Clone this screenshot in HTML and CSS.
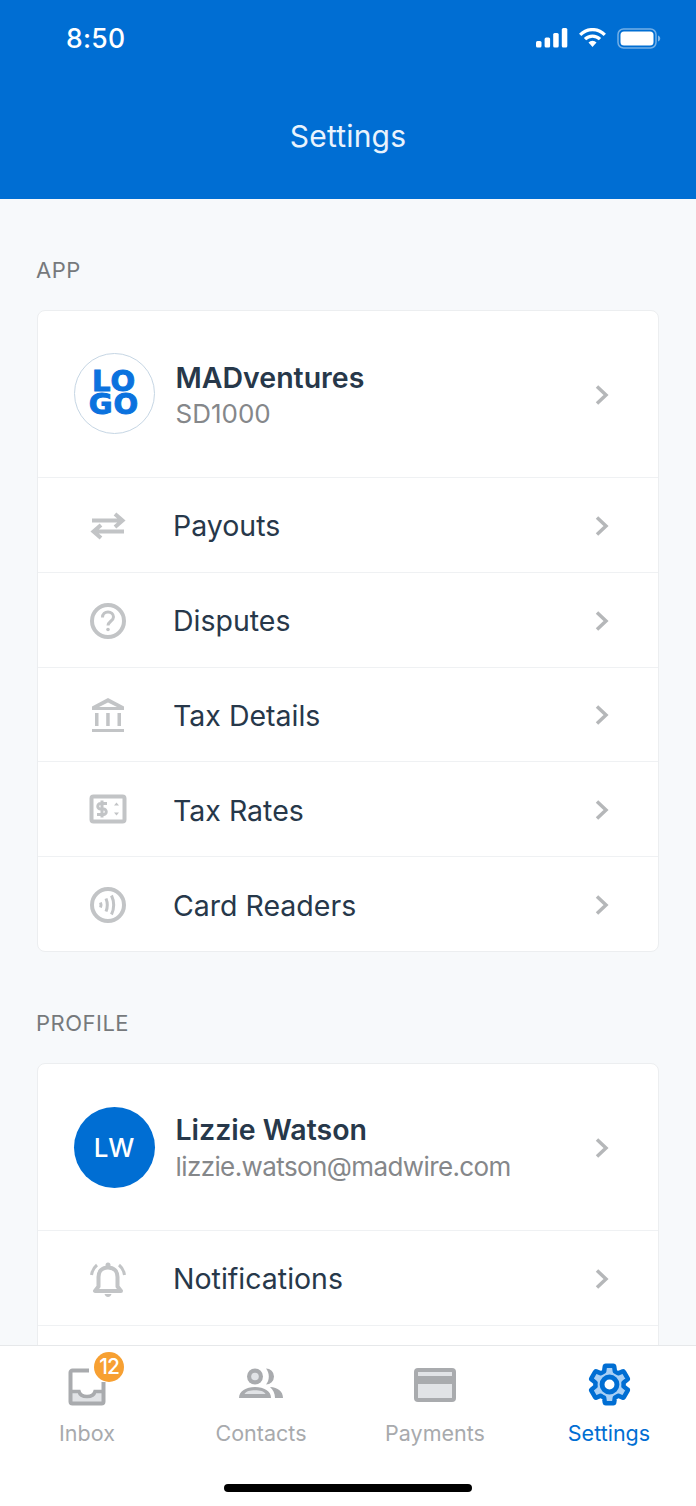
FILE: index.html
```html
<!DOCTYPE html>
<html lang="en">
<head>
<meta charset="utf-8">
<title>Settings</title>
<link rel="stylesheet" href="styles.css">
</head>
<body>
<div class="phone">
  <header class="header">
    <div class="status">
      <span class="time">8:50</span>
      <div class="status-icons">
        <svg width="32" height="20" viewBox="0 0 32 20"><g fill="#fff"><rect x="0" y="13" width="5.5" height="6.5" rx="1.5"/><rect x="8.6" y="9.5" width="5.5" height="10" rx="1.5"/><rect x="17.2" y="5" width="5.5" height="14.500" rx="1.500"/><rect x="25.800" y="0" width="5.500" height="19.500" rx="1.500"/></g></svg>
        <svg width="27" height="20" viewBox="0 0 27 20"><g fill="none" stroke="#fff" stroke-width="3.200"><path d="M1.200 6.800a17 17 0 0 1 24.600 0"/><path d="M6 11.200a10.500 10.500 0 0 1 15 0"/></g><path d="M9.500 14.600a5.500 5.500 0 0 1 8 0L13.500 19z" fill="#fff"/></svg>
        <svg width="44" height="21" viewBox="0 0 44 21"><rect x="1" y="1" width="38" height="19" rx="5.500" fill="none" stroke="#fff" stroke-opacity=".45" stroke-width="1.500"/><rect x="3.500" y="3.500" width="33" height="14" rx="3.500" fill="#fff"/><path d="M41 7.500c1.500.5 2.200 1.600 2.200 3s-.7 2.500-2.200 3z" fill="#fff" fill-opacity=".5"/></svg>
      </div>
    </div>
    <h1 class="title">Settings</h1>
  </header>

  <main class="content">
    <h2 class="section-label">APP</h2>
    <section class="card">
      <a class="row row-profile">
        <span class="avatar avatar-logo"><span class="logo-text"><span class="logo-line">LO</span><span class="logo-line">GO</span></span></span>
        <span class="profile-text"><strong class="name">MADventures</strong><span class="sub">SD1000</span></span>
        <svg class="chevron" viewBox="0 0 16 24"><path d="M3 3.500 12 12l-9 8.500"/></svg>
      </a>
      <a class="row">
        <span class="row-icon"><svg width="38" height="30" viewBox="0 0 38 30"><g class="ico-line"><path d="M3 9.500h31M26 3l7.500 6.500L26 16"/><path d="M35 20.500H4M12 14l-7.500 6.500L12 27"/></g></svg></span>
        <span class="row-label">Payouts</span>
        <svg class="chevron" viewBox="0 0 16 24"><path d="M3 3.500 12 12l-9 8.500"/></svg>
      </a>
      <a class="row">
        <span class="row-icon"><svg width="38" height="38" viewBox="0 0 38 38"><circle class="ico-line" cx="19" cy="19" r="16"/><path class="ico-thin" d="M13.500 15.500c0-3.500 2.500-5.500 5.500-5.500s5.500 2 5.500 5c0 4-5.500 4.500-5.500 8.500"/><circle cx="19" cy="27.500" r="1.800" fill="#c2c4c6"/></svg></span>
        <span class="row-label">Disputes</span>
        <svg class="chevron" viewBox="0 0 16 24"><path d="M3 3.500 12 12l-9 8.500"/></svg>
      </a>
      <a class="row">
        <span class="row-icon"><svg width="38" height="38" viewBox="0 0 38 38"><path d="M19 2 35 10.500v3.500H3v-3.500z" fill="#c2c4c6"/><path d="M19 6.500 28 11H10z" fill="#fff"/><g fill="#c2c4c6"><rect x="6" y="17" width="3.500" height="13"/><rect x="17.200" y="17" width="3.500" height="13"/><rect x="28.500" y="17" width="3.500" height="13"/><rect x="3" y="33" width="32" height="3"/></g></svg></span>
        <span class="row-label">Tax Details</span>
        <svg class="chevron" viewBox="0 0 16 24"><path d="M3 3.500 12 12l-9 8.500"/></svg>
      </a>
      <a class="row">
        <span class="row-icon"><svg width="38" height="32" viewBox="0 0 38 32"><rect class="ico-line" x="2.500" y="2.500" width="33" height="25" rx="2"/><path class="ico-thin" d="M18 9.500h-6.500a2.200 2.200 0 0 0 0 5.500h3a2.200 2.200 0 0 1 0 5.500H8M13 6.500v17"/><path d="M25 11.500l2.500-3 2.500 3zM25 18.500l2.500 3 2.500-3z" fill="#c2c4c6"/></svg></span>
        <span class="row-label">Tax Rates</span>
        <svg class="chevron" viewBox="0 0 16 24"><path d="M3 3.500 12 12l-9 8.500"/></svg>
      </a>
      <a class="row">
        <span class="row-icon"><svg width="38" height="38" viewBox="0 0 38 38"><circle class="ico-line" cx="19" cy="19" r="16"/><g class="ico-thin"><path d="M11.500 16.500c.8 1.800.8 3.200 0 5"/><path d="M17 12.500c1.800 4.500 1.800 8.500 0 13"/><path d="M22.500 9.500c3 6.500 3 12.500 0 19"/></g></svg></span>
        <span class="row-label">Card Readers</span>
        <svg class="chevron" viewBox="0 0 16 24"><path d="M3 3.500 12 12l-9 8.500"/></svg>
      </a>
    </section>

    <h2 class="section-label section-label-next">PROFILE</h2>
    <section class="card">
      <a class="row row-profile">
        <span class="avatar avatar-user">LW</span>
        <span class="profile-text"><strong class="name">Lizzie Watson</strong><span class="sub sub-email">lizzie.watson@madwire.com</span></span>
        <svg class="chevron" viewBox="0 0 16 24"><path d="M3 3.500 12 12l-9 8.500"/></svg>
      </a>
      <a class="row">
        <span class="row-icon"><svg width="38" height="38" viewBox="0 0 38 38"><path class="ico-line" d="M6 31h26l-3.500-4.500V17c0-6-4-9.500-9.500-9.500S9.500 11 9.500 17v9.500z" stroke-linejoin="round"/><circle cx="19" cy="5" r="2.500" fill="#c2c4c6"/><path d="M15.500 34h7c-.5 2-2 3-3.500 3s-3-1-3.500-3z" fill="#c2c4c6"/><g class="ico-thin"><path d="M2.500 15C3 11 5 7.500 8 5"/><path d="M35.500 15C35 11 33 7.500 30 5"/></g></svg></span>
        <span class="row-label">Notifications</span>
        <svg class="chevron" viewBox="0 0 16 24"><path d="M3 3.500 12 12l-9 8.500"/></svg>
      </a>
      <a class="row"></a>
    </section>
  </main>

  <nav class="tabbar">
    <div class="tabs">
      <a class="tab">
        <span class="tab-icon tab-icon-inbox">
          <svg width="40" height="40" viewBox="0 0 40 40"><path d="M3 25h9c1 4 4 5 8 5s7-1 8-5h9v11H3z" fill="#e1e3e6"/><g fill="none" stroke="#a9abae" stroke-width="4"><path d="M22 3.500H5.500a2 2 0 0 0-2 2v29a2 2 0 0 0 2 2h29a2 2 0 0 0 2-2V15"/><path d="M3.500 24.500H12c1 4 4 5 8 5s7-1 8-5h8.500" stroke-width="3.500"/></g></svg>
          <span class="badge">12</span>
        </span>
        <span class="tab-label">Inbox</span>
      </a>
      <a class="tab">
        <span class="tab-icon">
          <svg width="44" height="32" viewBox="0 0 44 32"><path d="M16 1.500a8 8 0 1 1 0 16 8 8 0 0 1 0-16z" fill="#a9abae"/><circle cx="16" cy="9.500" r="3.800" fill="#e1e3e6"/><path d="M0 31c0-7 7-11 16-11s16 4 16 11z" fill="#a9abae"/><path d="M5.500 27c1.500-2.800 5.500-3.800 10.500-3.800S25 24.200 26.500 27z" fill="#e1e3e6"/><path d="M27 1.500a8 8 0 0 1 0 16c1.800-2 2.800-5 2.800-8S28.800 3.500 27 1.500zM31 20c8 .5 13 4.500 13 11h-8c0-4.500-2-8.500-5-11z" fill="#a9abae"/></svg>
        </span>
        <span class="tab-label">Contacts</span>
      </a>
      <a class="tab">
        <span class="tab-icon">
          <svg width="44" height="36" viewBox="0 0 44 36"><rect x="1" y="1" width="42" height="34" rx="4" fill="#a9abae"/><rect x="5" y="5" width="34" height="4" fill="#e1e3e6"/><rect x="5" y="17" width="34" height="14" fill="#e1e3e6"/></svg>
        </span>
        <span class="tab-label">Payments</span>
      </a>
      <a class="tab tab-active">
        <span class="tab-icon">
          <svg width="47" height="47" viewBox="0 0 24 24"><path d="M19.140 12.940c.04-.3.060-.61.060-.94 0-.32-.02-.64-.070-.94l2.030-1.580c.18-.14.230-.41.120-.61l-1.920-3.320c-.12-.22-.370-.29-.590-.22l-2.390.96c-.5-.38-1.030-.7-1.620-.94l-.36-2.540c-.04-.24-.24-.41-.48-.41h-3.840c-.24 0-.43.170-.47.410l-.36 2.540c-.59.240-1.130.570-1.620.94l-2.390-.96c-.22-.08-.47 0-.59.220L2.740 8.870c-.12.210-.08.470.120.610l2.030 1.580c-.05.300-.09.630-.09.940s.02.640.070.940l-2.030 1.580c-.18.140-.23.410-.12.610l1.920 3.320c.12.220.37.290.59.220l2.390-.96c.5.380 1.030.7 1.620.94l.36 2.540c.05.240.24.410.48.410h3.840c.24 0 .44-.17.470-.41l.36-2.540c.59-.24 1.130-.56 1.620-.94l2.390.96c.22.080.47 0 .59-.22l1.920-3.320c.12-.22.070-.47-.12-.61l-2.010-1.580z" fill="#a9d0f5" stroke="#006ed3" stroke-width="2.300" stroke-linejoin="round"/><circle cx="12" cy="12" r="3.800" fill="#fff" stroke="#006ed3" stroke-width="2.500"/></svg>
        </span>
        <span class="tab-label">Settings</span>
      </a>
    </div>
    <div class="home-indicator"></div>
  </nav>
</div>
</body>
</html>
```

FILE: styles.css
```css
* { box-sizing: border-box; }
html, body { margin: 0; padding: 0; }
body { background: #f7f9fb; font-family: Inter, "Liberation Sans", sans-serif; }

.phone {
  width: 696px;
  height: 1506px;
  display: flex;
  flex-direction: column;
  overflow: hidden;
  background: #f7f9fb;
}

/* header */
.header {
  flex: none;
  height: 199px;
  background: #006ed3;
  color: #fff;
  padding-top: 18px;
}
.status {
  height: 40px;
  padding: 0 35px 0 66px;
  display: flex;
  align-items: center;
  justify-content: space-between;
}
.time { font-size: 26.500px; font-weight: 500; letter-spacing: 0.3px; }
.status-icons { display: flex; align-items: center; gap: 11px; }
.title {
  margin: 0;
  padding-top: 60px;
  text-align: center;
  font-size: 30px;
  line-height: 36px;
  font-weight: 400;
  letter-spacing: 0.2px;
  color: #e9f3fd;
}

/* content */
.content {
  flex: 1;
  min-height: 0;
  overflow: hidden;
  padding: 58px 37px 0;
}
.section-label {
  margin: 0 0 26px -1px;
  font-size: 22px;
  line-height: 27px;
  font-weight: 400;
  letter-spacing: 0.5px;
  color: #76797c;
}
.section-label-next { margin-top: 58px; }
.card {
  background: #fff;
  border: 1px solid #eceef0;
  border-radius: 8px;
}
.row {
  height: 94.800px;
  display: flex;
  align-items: center;
  padding-top: 2px;
  padding-right: 48px;
  border-top: 1.500px solid #eff1f3;
}
.row:first-child { border-top: 0; }
.row-profile { height: 166px; padding-left: 35.500px; }
.row-icon {
  flex: none;
  width: 135px;
  padding-left: 51px;
  display: flex;
  align-items: center;
}
.row-label {
  flex: 1;
  font-size: 28.500px;
  color: #27384a;
}
.chevron {
  flex: none;
  width: 16px;
  height: 24px;
  fill: none;
  stroke: #b5b7b9;
  stroke-width: 3.500;
}
.ico-line { fill: none; stroke: #c2c4c6; stroke-width: 4; }
.ico-thin { fill: none; stroke: #c2c4c6; stroke-width: 3; }

.avatar {
  flex: none;
  width: 81px;
  height: 81px;
  border-radius: 50%;
  display: flex;
  align-items: center;
  justify-content: center;
  margin-right: 21px;
}
.avatar-logo { border: 1.500px solid #c6d6e4; background: #fff; margin-top: -4px; }
.logo-text {
  font-family: "DejaVu Sans", sans-serif;
  font-size: 29px;
  font-weight: 700;
  color: #0b72de;
  -webkit-text-stroke: 1px #0b72de;
  letter-spacing: 1px;
  text-align: center;
}
.logo-line { display: block; height: 23px; line-height: 23px; }
.avatar-user {
  background: #006ed3;
  color: #fff;
  font-size: 26px;
  font-weight: 500;
}
.profile-text {
  flex: 1;
  display: flex;
  flex-direction: column;
  margin-top: 1px;
}
.name {
  font-size: 28.500px;
  line-height: 37px;
  font-weight: 600;
  color: #27384a;
}
.sub {
  font-size: 26px;
  line-height: 36px;
  font-weight: 400;
  color: #85878a;
}
.sub-email { letter-spacing: -0.6px; margin-top: 1px; }

/* tab bar */
.tabbar {
  flex: none;
  height: 161px;
  background: #fff;
  border-top: 1.500px solid #e6e8ea;
}
.tabs {
  display: grid;
  grid-template-columns: 174px 174px 174px 174px;
}
.tab {
  display: flex;
  flex-direction: column;
  align-items: center;
}
.tab-icon {
  position: relative;
  height: 73px;
  padding-top: 21px;
  display: flex;
  align-items: flex-start;
  justify-content: center;
}
.tab-active .tab-icon { padding-top: 15px; }
.tab-label {
  font-size: 21.500px;
  line-height: 28px;
  color: #a8aaad;
}
.tab-active .tab-label { color: #006ed3; }
.badge {
  position: absolute;
  left: 27px;
  top: 6px;
  width: 30px;
  height: 30px;
  border-radius: 50%;
  background: #f7a032;
  color: #fff;
  font-size: 21px;
  line-height: 30px;
  font-weight: 500;
  text-align: center;
  letter-spacing: -1px;
}
.home-indicator {
  width: 248px;
  height: 8px;
  margin: 37px auto 0;
  border-radius: 4px;
  background: #000;
}
```
